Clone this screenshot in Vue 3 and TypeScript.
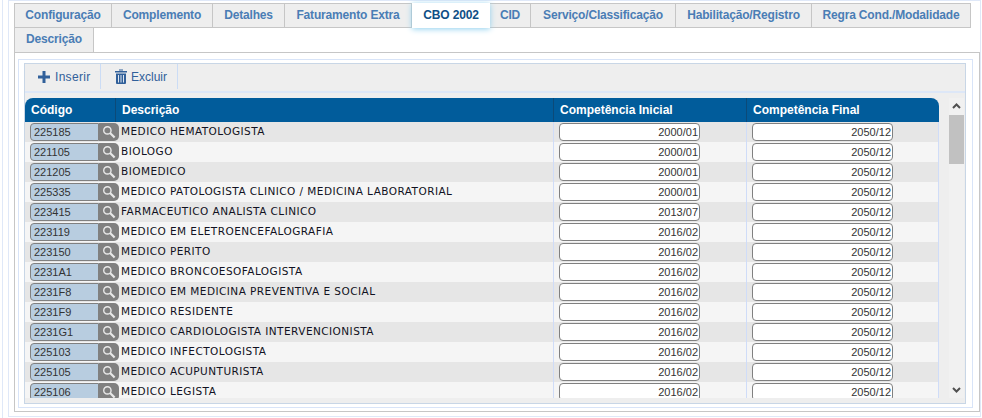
<script setup lang="ts">
interface Row { code: string; desc: string; ini: string; fim: string }
interface Tab { label: string; width: number }
const tabs: Tab[] = [
  { label: 'Configuração', width: 98 },
  { label: 'Complemento', width: 101 },
  { label: 'Detalhes', width: 72 },
  { label: 'Faturamento Extra', width: 127 },
  { label: 'CBO 2002', width: 78 },
  { label: 'CID', width: 41 },
  { label: 'Serviço/Classificação', width: 145 },
  { label: 'Habilitação/Registro', width: 136 },
  { label: 'Regra Cond./Modalidade', width: 159 },
  { label: 'Descrição', width: 80 },
]
const rows: Row[] = [
  ['225185', 'MEDICO HEMATOLOGISTA', '2000/01'],
  ['221105', 'BIOLOGO', '2000/01'],
  ['221205', 'BIOMEDICO', '2000/01'],
  ['225335', 'MEDICO PATOLOGISTA CLINICO / MEDICINA LABORATORIAL', '2000/01'],
  ['223415', 'FARMACEUTICO ANALISTA CLINICO', '2013/07'],
  ['223119', 'MEDICO EM ELETROENCEFALOGRAFIA', '2016/02'],
  ['223150', 'MEDICO PERITO', '2016/02'],
  ['2231A1', 'MEDICO BRONCOESOFALOGISTA', '2016/02'],
  ['2231F8', 'MEDICO EM MEDICINA PREVENTIVA E SOCIAL', '2016/02'],
  ['2231F9', 'MEDICO RESIDENTE', '2016/02'],
  ['2231G1', 'MEDICO CARDIOLOGISTA INTERVENCIONISTA', '2016/02'],
  ['225103', 'MEDICO INFECTOLOGISTA', '2016/02'],
  ['225105', 'MEDICO ACUPUNTURISTA', '2016/02'],
  ['225106', 'MEDICO LEGISTA', '2016/02'],
].map(([code, desc, ini]) => ({ code, desc, ini, fim: '2050/12' }))
</script>

<template>
  <div class="page">
    <div class="frame">
      <div class="tabs">
        <div
          v-for="t in tabs"
          :key="t.label"
          class="tab"
          :class="{ active: t.label === 'CBO 2002' }"
          :style="{ width: t.width + 'px' }"
        >{{ t.label }}</div>
      </div>
      <div class="panel">
        <div class="inner">
          <div class="box">
            <div class="toolbar">
              <div class="tool tool1">
                <svg width="12" height="12" viewBox="0 0 12 12"><path d="M4.500 0h3v4.500H12v3H7.500V12h-3V7.500H0v-3h4.500z" fill="#31609a"/></svg>
                <span>Inserir</span>
              </div>
              <div class="tool tool2">
                <svg width="12" height="15" viewBox="0 0 12 15"><path d="M4 1.500V0.500h4v1zM0 2h12v1.500H0zM1 4.500h10V14a1 1 0 0 1-1 1H2a1 1 0 0 1-1-1z" fill="#31609a"/><path d="M3.500 6v7.500M6 6v7.500M8.500 6v7.500" stroke="#dfe6ef" stroke-width="1"/></svg>
                <span>Excluir</span>
              </div>
            </div>
            <div class="grid-wrap">
              <div class="table">
                <div class="head">
                  <div class="c1">Código</div>
                  <div class="c2">Descrição</div>
                  <div class="c3">Competência Inicial</div>
                  <div class="c4">Competência Final</div>
                </div>
                <div class="body">
                  <div v-for="r in rows" :key="r.code" class="row">
                    <div class="c1 cell">
                      <div class="lookup">
                        <span class="code">{{ r.code }}</span>
                        <span class="search">
                          <svg width="14" height="14" viewBox="0 0 13 13"><circle cx="5" cy="5" r="3.400" fill="none" stroke="#e8e8e8" stroke-width="1.300"/><path d="M7.500 7.500l4.200 4.200" stroke="#e8e8e8" stroke-width="2"/></svg>
                        </span>
                      </div>
                    </div>
                    <div class="c2 cell desc">{{ r.desc }}</div>
                    <div class="c3 cell"><div class="date">{{ r.ini }}</div></div>
                    <div class="c4 cell"><div class="date">{{ r.fim }}</div></div>
                  </div>
                </div>
              </div>
              <div class="scroll">
                <svg class="arrow" width="9" height="6" viewBox="0 0 9 6"><path d="M1 5l3.500-3.500L8 5" fill="none" stroke="#505050" stroke-width="2"/></svg>
                <div class="thumb"></div>
                <svg class="arrow down" width="9" height="6" viewBox="0 0 9 6"><path d="M1 1l3.500 3.500L8 1" fill="none" stroke="#505050" stroke-width="2"/></svg>
              </div>
            </div>
          </div>
        </div>
      </div>
    </div>
  </div>
</template>

<style>
html, body { margin: 0; background: #fff; }
</style>

<style scoped>
.page {
  width: 980px;
  height: 418px;
  margin-left: 2px;
  box-sizing: border-box;
  border-left: 1px solid #dfe8f8;
  padding-left: 5px;
  font-family: "Liberation Sans", Arial, sans-serif;
  overflow: hidden;
}
.frame {
  box-sizing: border-box;
  width: 973px;
  height: 417px;
  border: 1px solid #dfe8f8;
  padding: 2px 0 0 5px;
}
.tabs {
  display: flex;
  flex-wrap: wrap;
  width: 966px;
}
.tab {
  box-sizing: border-box;
  height: 25px;
  line-height: 23px;
  text-align: center;
  background: #eeeeee;
  border: 1px solid #c6c6c6;
  border-left: 0;
  font-size: 12px;
  letter-spacing: -0.170px;
  font-weight: 700;
  color: #4a7db5;
  white-space: nowrap;
}
.tab:first-child { border-left: 1px solid #c6c6c6; }
.tab:last-child {
  height: 24px;
  border-left: 1px solid #c6c6c6;
  border-top: 0;
  border-bottom: 0;
}
.tab.active {
  background: #fff;
  color: #0f4f86;
  border: 0;
  line-height: 24px;
  box-shadow: 0 1px 6px #8fd0ee;
  position: relative;
}
.panel {
  box-sizing: border-box;
  width: 966px;
  height: 360px;
  border: 1px solid #c6c6c6;
  padding: 6px 6px 3px 3px;
}
.inner {
  box-sizing: border-box;
  height: 100%;
  border: 1px solid #d8e4f8;
  padding: 3px 6px 3px 5px;
}
.box {
  box-sizing: border-box;
  height: 100%;
  border: 1px solid #c8d6e6;
  background: #eeeeee;
}
.toolbar {
  display: flex;
  height: 27px;
  border-bottom: 2px solid #dde7f7;
  font-size: 12px;
  color: #31609a;
}
.tool {
  display: flex;
  align-items: center;
  gap: 5px;
  height: 25px;
  padding: 0 10px 0 13px;
  border-right: 1px solid #cbdcf5;
}
.tool1 { width: 76px; box-sizing: border-box; padding-right: 0; letter-spacing: 0.300px; }
.tool2 { padding-left: 14px; gap: 4px; }
.grid-wrap {
  display: flex;
  height: 300px;
  margin-top: 5px;
}
.table { width: 914px; height: 300px; overflow: hidden; }
.head {
  display: flex;
  height: 24px;
  line-height: 24px;
  background: #015c9b;
  border-radius: 8px 8px 0 0;
  color: #fff;
  font-size: 12px;
  font-weight: 700;
}
.c1 { width: 91px; box-sizing: border-box; }
.c2 { width: 438px; box-sizing: border-box; }
.c3 { width: 193px; box-sizing: border-box; }
.c4 { width: 192px; box-sizing: border-box; }
.head > div { padding-left: 6px; border-right: 1px solid #0c4a78; }
.head > div:last-child { border-right: 0; }
.row { display: flex; height: 20px; background: #f5f5f5; }
.row:nth-child(odd) { background: #e6e6e6; }
.cell { padding-left: 5px; border-right: 1px solid #cfdcf8; }
.c1.cell { border-right: 0; }
.lookup { display: flex; width: 90px; height: 18px; margin-top: 1px; position: relative; z-index: 1; }
.code {
  box-sizing: border-box;
  width: 69px;
  height: 18px;
  line-height: 17px;
  padding-left: 3px;
  background: #b8cde0;
  border: 1px solid #808080;
  border-radius: 4px 0 0 4px;
  font-size: 11px;
  color: #333;
}
.search {
  width: 20px;
  height: 18px;
  background: #808080;
  border-radius: 0 5px 5px 0;
  display: flex;
  align-items: center;
  justify-content: center;
}
.desc {
  font-family: "DejaVu Sans", sans-serif;
  font-size: 10.500px;
  line-height: 19px;
  color: #111122;
  padding-left: 5px;
  letter-spacing: 0.450px;
  white-space: nowrap;
}
.date {
  box-sizing: border-box;
  width: 141px;
  height: 18px;
  margin-top: 1px;
  line-height: 17px;
  padding-right: 1px;
  background: #fff;
  border: 1px solid #808080;
  border-radius: 4px;
  text-align: right;
  font-size: 11px;
  color: #333;
}
.scroll {
  width: 15px;
  margin-left: 10px;
  height: 300px;
  background: #f1f1f1;
  display: flex;
  flex-direction: column;
  align-items: center;
  position: relative;
}
.arrow { margin-top: 5px; }
.arrow.down { position: absolute; bottom: 5px; }
.thumb {
  align-self: stretch;
  height: 49px;
  margin-top: 6px;
  background: #c1c1c1;
}
</style>
